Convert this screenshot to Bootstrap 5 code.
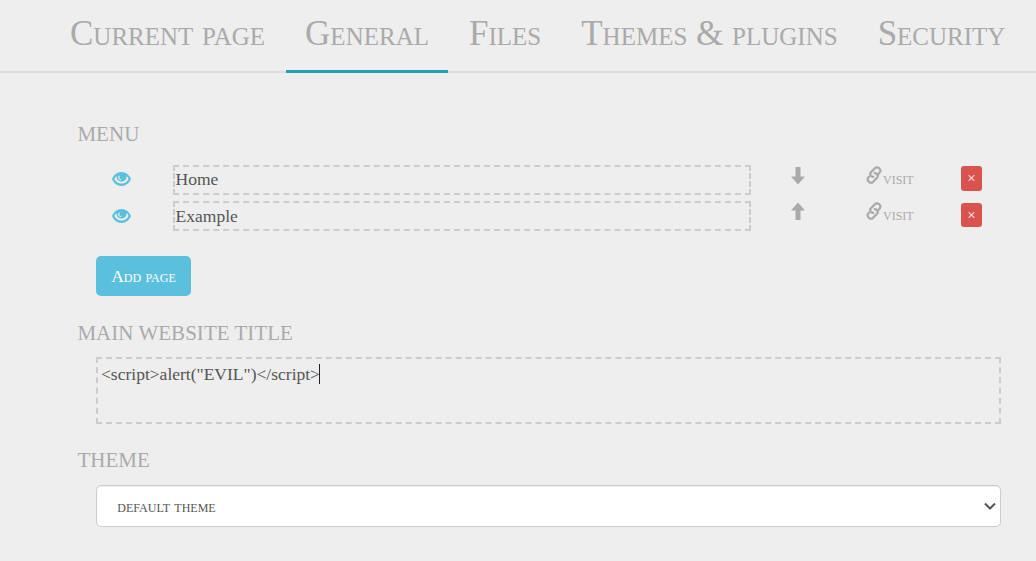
<!DOCTYPE html>
<html lang="en">
<head>
<meta charset="utf-8">
<meta name="viewport" content="width=device-width, initial-scale=1">
<title>Settings</title>
<link href="https://cdn.jsdelivr.net/npm/bootstrap@5.3.0/dist/css/bootstrap.min.css" rel="stylesheet">
<style>
body{background:#eee;color:#555;font:17.5px/25px "Liberation Serif",serif;min-height:561px;overflow:hidden}
.settings-tabs{height:73px;padding-left:51px;gap:2px;box-shadow:inset 0 -2px #ddd}
.settings-tabs .nav-link{height:73px;padding:9px 19px 0;font-size:35px;line-height:50px;font-variant:small-caps;color:#aaa;border-bottom:3px solid transparent;white-space:nowrap}
.settings-tabs .nav-link.active{border-color:#24a0b2}
.settings-body{padding:46px 35px 0 77px}
.section-title{font-size:21px;line-height:30px;color:#aaa;margin:0;font-weight:400;letter-spacing:.03px;text-indent:.4px}
.section-box{margin-left:19px}
.page-row{height:30px;margin-bottom:6px}
.page-row svg{display:block}
.eye-cell{width:77px;padding:7px 0 0 16px}
.page-row + .page-row .eye-cell{padding-top:8px}
.dashed{border:2px dashed #ccc;background:transparent;color:#555}
.page-name{width:578px;height:30px;padding:0 .6px;line-height:26px}
.page-row:first-child .page-name{line-height:24px}
.arrow-cell{width:75px;padding:2px 0 0 40px}
.page-row + .page-row .arrow-cell{padding-top:1px}
.visit-link{width:135px;padding:1px 0 0 39px;color:#aaa;font-variant:small-caps;line-height:24px}
.delete-btn{width:21px;height:25px;margin-top:1px;padding:0;border:0;border-radius:3px;background:#d9534f;color:#fff;font-size:15px;line-height:25px}
.page-row + .page-row .delete-btn{height:24px;margin-top:2px;line-height:24px}
.add-btn{width:95px;height:40px;margin-top:25px;padding:0;background:#5bc0de;color:#fff;font-size:17.5px;font-variant:small-caps;border:0;border-radius:5px}
.title-field{height:67px;padding:3px 3px;line-height:25px}
.caret{display:inline-block;width:1px;height:20px;background:#222;vertical-align:-4px;margin-left:-1px}
.theme-select{height:42px;padding:0 4px 0 20.300px;background:#fff;border:1px solid #ccc;border-radius:5px;box-shadow:inset 0 1px 1px rgba(0,0,0,.075);font-variant:small-caps}
</style>
</head>
<body>
<svg class="d-none" aria-hidden="true">
  <symbol id="eye" viewBox="0 0 19 14"><path fill="#5bc0de" fill-rule="evenodd" d="M9.500 0C14 0 17.400 3.200 19 7c-1.600 3.800-5 7-9.500 7S1.600 10.800 0 7C1.600 3.200 5 0 9.500 0ZM4.500 4.100C3.600 4.900 2.900 5.900 2.400 7c1.400 2.700 3.900 4.500 7.100 4.500s5.700-1.800 7.100-4.500c-.5-1.100-1.200-2.100-2.100-2.900.3 3.300-2 5.500-5 5.500s-5.300-2.200-5-5.500Z"/><path fill="#eee" d="M7.600 3.200C5.900 4.100 5.600 6.100 6.900 7.300c.9.900 2.300.8 2.700-.2C8.200 6.500 7.200 5 7.600 3.200Z"/><circle cx="8.300" cy="6" r="1" fill="#5bc0de"/></symbol>
  <symbol id="arrow" viewBox="0 0 14 18"><path fill="#aaa" d="M4.500 0h5v9.500H14L7 17.500 0 9.500h4.500Z"/></symbol>
  <symbol id="chain" viewBox="0 0 18 18"><g fill="none" stroke="#aaa" stroke-width="2.200" stroke-linecap="round" stroke-linejoin="round"><path d="M8.200 10.900Q4.700 10.200 5.200 7.600 5.300 6.900 6.100 6.100L9.900 2.200Q12 .4 14.200 2.200 16.400 4.300 14.700 6.500L13 8.500"/><path d="M9.800 7.100Q13.300 7.800 12.800 10.400 12.700 11.100 11.900 11.900L8.100 15.800Q6 17.600 3.800 15.800 1.600 13.700 3.300 11.500L4 10.700"/></g></symbol>
</svg>
<nav class="nav flex-nowrap settings-tabs">
  <a class="nav-link" href="#">Current page</a>
  <a class="nav-link active" href="#">General</a>
  <a class="nav-link" href="#">Files</a>
  <a class="nav-link" href="#">Themes &amp; plugins</a>
  <a class="nav-link" href="#">Security</a>
</nav>
<main class="settings-body">
  <h2 class="section-title">MENU</h2>
  <div class="section-box pt-3">
    <div>
      <div class="page-row d-flex align-items-start">
        <div class="eye-cell"><svg width="19" height="14"><use href="#eye"/></svg></div>
        <div class="dashed page-name">Home</div>
        <div class="arrow-cell"><svg width="14" height="18"><use href="#arrow"/></svg></div>
        <a class="visit-link d-flex text-decoration-none" href="#"><svg width="18" height="18"><use href="#chain"/></svg><span>visit</span></a>
        <button class="delete-btn">×</button>
      </div>
      <div class="page-row d-flex align-items-start">
        <div class="eye-cell"><svg width="19" height="14"><use href="#eye"/></svg></div>
        <div class="dashed page-name">Example</div>
        <div class="arrow-cell"><svg width="14" height="18" style="transform:rotate(180deg)"><use href="#arrow"/></svg></div>
        <a class="visit-link d-flex text-decoration-none" href="#"><svg width="18" height="18"><use href="#chain"/></svg><span>visit</span></a>
        <button class="delete-btn">×</button>
      </div>
    </div>
    <button class="btn add-btn d-block">Add page</button>
  </div>
  <h2 class="section-title" style="margin-top:22px">MAIN WEBSITE TITLE</h2>
  <div class="section-box dashed title-field" style="margin-top:9px">&lt;script&gt;alert("EVIL")&lt;/script&gt;<span class="caret"></span></div>
  <h2 class="section-title" style="margin-top:21px">THEME</h2>
  <div class="section-box theme-select d-flex align-items-center justify-content-between" style="margin-top:10px"><span>default theme</span>
    <svg width="12" height="8" viewBox="0 0 12 8"><path d="m1 1.500 5 5 5-5" fill="none" stroke="#555" stroke-width="2"/></svg></div>
</main>
<script src="https://cdn.jsdelivr.net/npm/bootstrap@5.3.0/dist/js/bootstrap.bundle.min.js"></script>
</body>
</html>
